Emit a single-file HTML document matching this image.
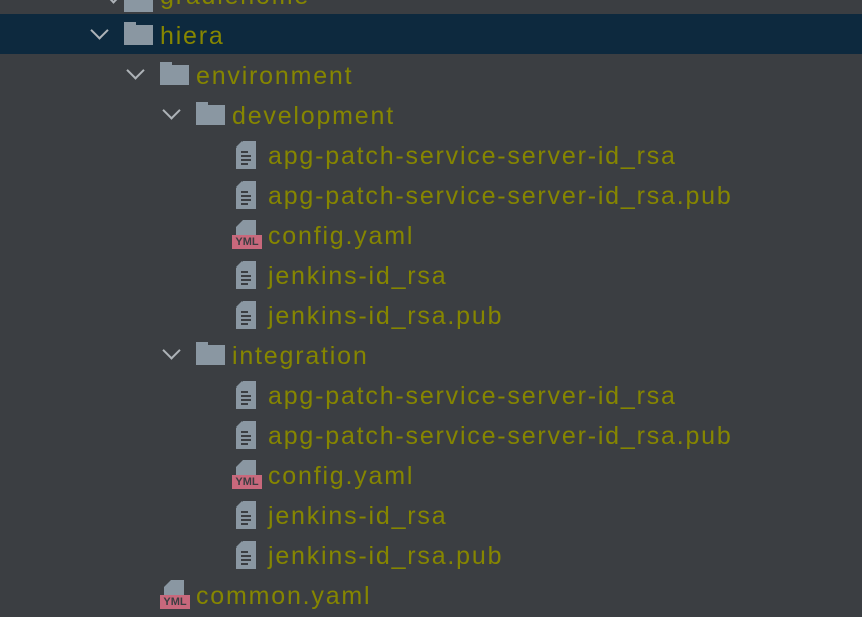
<!DOCTYPE html>
<html><head><meta charset="utf-8"><style>
body{margin:0;width:862px;height:616px;background:#3b3e42;overflow:hidden;position:relative;font-family:"Liberation Sans",sans-serif}
.sel{position:absolute;left:0;top:14px;width:862px;height:40px;background:#0d293e}
.r{position:absolute;height:40px;line-height:42px;font-size:25px;letter-spacing:1.8px;color:#868600;white-space:nowrap}
.ch{position:absolute;width:11px;height:11px;border-right:2px solid #aeb3b8;border-bottom:2px solid #aeb3b8;transform:rotate(45deg)}
.fo{position:absolute;width:29px;height:20px;background:#8a97a2}
.fo:before{content:"";position:absolute;left:0;top:-3px;width:12px;height:4px;background:#8a97a2}
.fi{position:absolute;width:20px;height:28px}
.yml{position:absolute;width:30px;height:14px;background:#c8687c;color:#3b3e42;font-size:11px;line-height:14px;text-align:center;font-weight:bold}
</style></head><body>
<div class="sel"></div>
<svg width="0" height="0" style="position:absolute"><defs>
<symbol id="f" viewBox="0 0 20 28"><path d="M7 0H20V28H0V7Z" fill="#8a97a2"/><path d="M0 6L6 0V6Z" fill="#8a97a2"/><path d="M5 11H12M5 15H15M5 19H15M5 23H12" stroke="#3b3e42" stroke-width="2"/></symbol>
<symbol id="y" viewBox="0 0 20 16"><path d="M7 0H20V16H0V7Z" fill="#8a97a2"/></symbol>
</defs></svg>
<div class="ch" style="left:107px;top:-12px"></div>
<div class="fo" style="left:124px;top:-8px"></div>
<div class="r" style="left:160px;top:-25px">gradlehome</div>
<div id="t"></div>
<script>
var rows=[[1,'hiera','d'],[2,'environment','d'],[3,'development','d'],[4,'apg-patch-service-server-id_rsa','f'],[4,'apg-patch-service-server-id_rsa.pub','f'],[4,'config.yaml','y'],[4,'jenkins-id_rsa','f'],[4,'jenkins-id_rsa.pub','f'],[3,'integration','d'],[4,'apg-patch-service-server-id_rsa','f'],[4,'apg-patch-service-server-id_rsa.pub','f'],[4,'config.yaml','y'],[4,'jenkins-id_rsa','f'],[4,'jenkins-id_rsa.pub','f'],[2,'common.yaml','y']];
var h='';
rows.forEach(function(r,i){var top=15+i*40,tx=160+(r[0]-1)*36,ix=tx-36;
if(r[0]==4){tx=268;ix=232;}
if(r[2]=='d'){h+='<div class="ch" style="left:'+(ix-31)+'px;top:'+(top+9)+'px"></div><div class="fo" style="left:'+ix+'px;top:'+(top+10)+'px"></div>';}
else if(r[2]=='f'){h+='<svg class="fi" style="left:'+(ix+4)+'px;top:'+(top+6)+'px"><use href="#f"/></svg>';}
else{h+='<svg style="position:absolute;left:'+(ix+4)+'px;top:'+(top+5)+'px" width="20" height="16"><use href="#y"/></svg><div class="yml" style="left:'+ix+'px;top:'+(top+20)+'px">YML</div>';}
h+='<div class="r" style="left:'+tx+'px;top:'+top+'px">'+r[1]+'</div>';});
document.getElementById('t').innerHTML=h;
</script>
</body></html>
